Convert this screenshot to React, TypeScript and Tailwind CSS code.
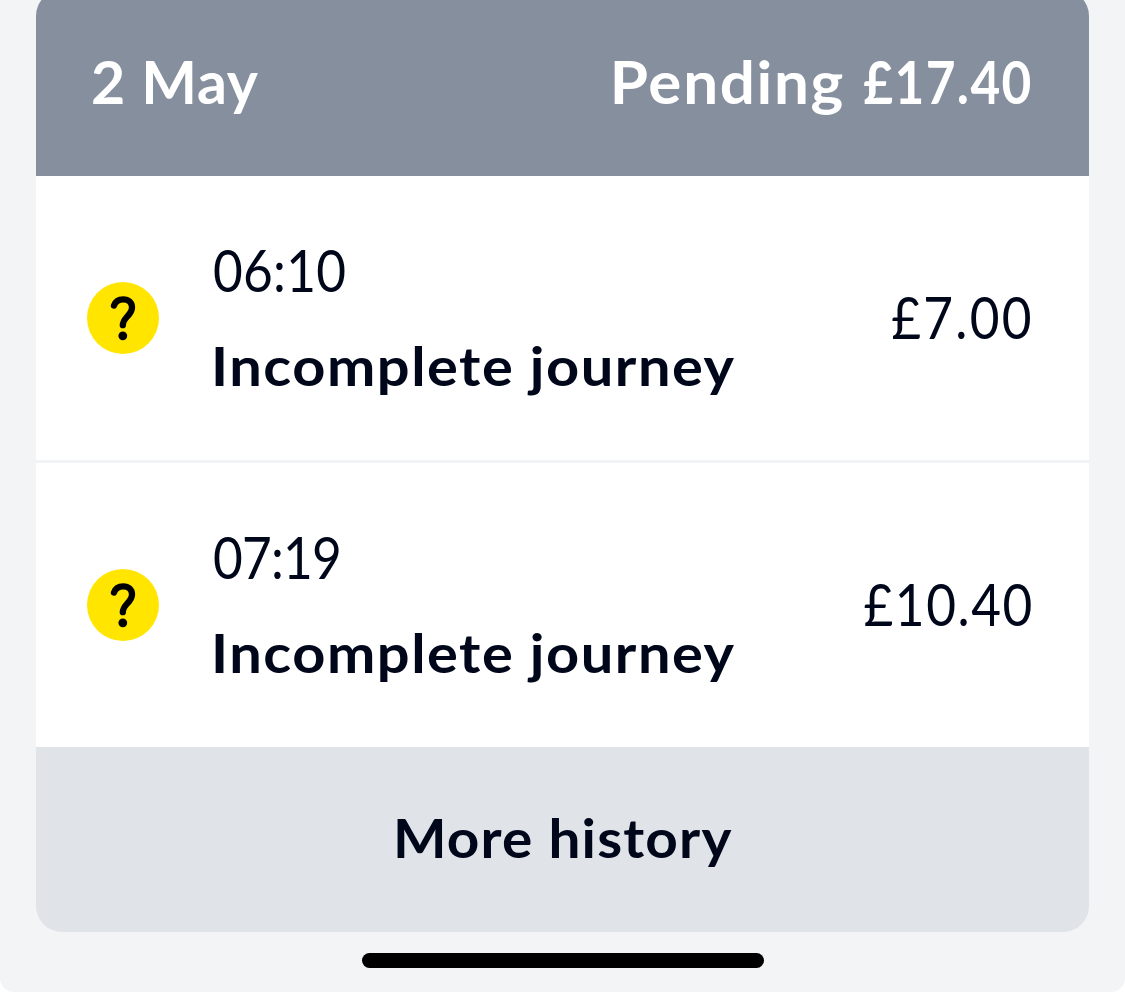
type Journey = { time: string; label: string; fare: string; timeClass: string; fareClass: string };

const journeys: Journey[] = [
  { time: "06:10", label: "Incomplete journey", fare: "£7.00", timeClass: "tracking-[0.3px]", fareClass: "tracking-[2.6px]" },
  { time: "07:19", label: "Incomplete journey", fare: "£10.40", timeClass: "tracking-[-0.9px]", fareClass: "tracking-[1.8px]" },
];

function QuestionBadge() {
  return (
    <svg viewBox="0 0 72 72" className="ml-[51px] h-[72px] w-[72px] shrink-0" role="img" aria-label="Unresolved">
      <circle cx="36" cy="36" r="36" fill="#ffe500" />
      <path
        d="M27 23.5C28.6 19 32 17.3 36.2 17.3C41.5 17.3 45 20.7 45 25.4C45 29.6 42.8 31.7 39.8 35C37 38.2 35.8 40.2 35.8 43.2"
        fill="none"
        stroke="#000"
        strokeWidth="6.3"
        strokeLinecap="round"
      />
      <circle cx="35.8" cy="53.8" r="4.4" fill="#000" />
    </svg>
  );
}

function JourneyRow({ time, label, fare, timeClass, fareClass }: Journey) {
  return (
    <li className="flex h-[284px] items-center bg-white pr-[55px]">
      <QuestionBadge />
      <div className="ml-[53px] flex flex-col items-start gap-[32px] pb-px">
        <span className={`ml-px origin-left scale-x-[0.87] text-[59px] leading-[64px] ${timeClass}`}>{time}</span>
        <span className="-ml-px origin-left scale-x-[1.09] text-[53px] leading-[64px] font-bold tracking-[1.4px] whitespace-nowrap">
          {label}
        </span>
      </div>
      <span className={`mb-[3px] ml-auto origin-right scale-x-[0.87] text-[59px] leading-[64px] ${fareClass}`}>{fare}</span>
    </li>
  );
}

export default function App() {
  return (
    <div className="h-[992px] overflow-hidden bg-white font-['Lato',sans-serif] text-[#00071a]">
      <main className="flex h-full flex-col items-center rounded-b-[14px] bg-[#f2f4f6]">
        <section className="-mt-[10px] h-[942px] w-[1053px] overflow-hidden rounded-[26px]">
          <header className="flex h-[186px] items-center justify-between bg-[#868f9e] pr-[56px] pb-[2px] pl-[55px] text-[59px] font-bold text-white">
            <h1 className="tracking-[0.8px]">2 May</h1>
            <p className="flex whitespace-nowrap">
              <span className="-mr-[7px] origin-right scale-x-[1.05] tracking-[1.6px]">Pending </span>
              <span className="origin-right scale-x-[0.87] tracking-[1.6px]">£17.40</span>
            </p>
          </header>
          <ul className="flex flex-col gap-[3px] bg-[#f1f3f6]">
            {journeys.map((journey) => (
              <JourneyRow key={journey.time} {...journey} />
            ))}
          </ul>
          <button className="flex h-[185px] w-full items-center justify-center bg-[#e0e4e9] pb-[4px] pl-[1px] text-[53px] font-bold">
            <span className="scale-x-[1.07] tracking-[1.1px]">More history</span>
          </button>
        </section>
        <div className="mt-[21px] h-[15px] w-[402px] rounded-full bg-black" />
      </main>
    </div>
  );
}
